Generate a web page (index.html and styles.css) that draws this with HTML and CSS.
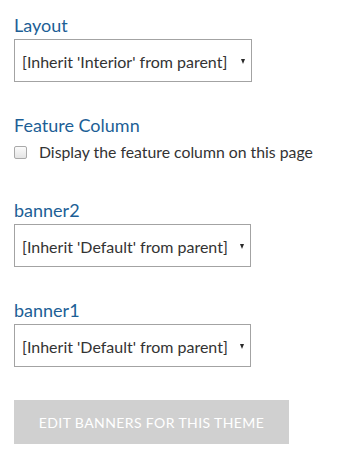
FILE: index.html
```html
<!DOCTYPE html>
<html>
<head>
<meta charset="utf-8">
<link rel="stylesheet" href="styles.css">
</head>
<body>
<div class="form">
  <div class="field">
    <label class="label">Layout</label>
    <div class="select wide"><span class="value">[Inherit 'Interior' from parent]</span><span class="arrow"></span></div>
  </div>
  <div class="field feature">
    <label class="label">Feature Column</label>
    <div class="check-row"><span class="checkbox"></span><span class="check-text">Display the feature column on this page</span></div>
  </div>
  <div class="field">
    <label class="label">banner2</label>
    <div class="select"><span class="value">[Inherit 'Default' from parent]</span><span class="arrow"></span></div>
  </div>
  <div class="field last">
    <label class="label">banner1</label>
    <div class="select"><span class="value">[Inherit 'Default' from parent]</span><span class="arrow"></span></div>
  </div>
  <div class="button">EDIT BANNERS FOR THIS THEME</div>
</div>
</body>
</html>
```
FILE: styles.css
```css
html, body { margin: 0; padding: 0; background: #fff; }
body { font-family: Lato, "Open Sans", sans-serif; }
.form { padding: 14px 14px 0 14px; display: flex; flex-direction: column; }
.field { display: flex; flex-direction: column; margin-bottom: 32px; }
.label { color: #1d5f96; font-size: 18px; line-height: 22px; height: 22px; margin-bottom: 3px; }
.select {
  width: 237px; height: 43px; box-sizing: border-box;
  border: 1px solid #a3a3a3; background: #fff;
  display: flex; align-items: center; padding: 1px 0 0 7px;
  color: #333; font-size: 16px;
}
.select.wide { width: 238px; }
.value { flex: 1; white-space: nowrap; }
.arrow {
  width: 0; height: 0; margin-right: 6px;
  border-left: 2.5px solid transparent; border-right: 2.5px solid transparent;
  border-top: 5px solid #2a2a2a;
}
.feature { margin-bottom: 37px; }
.check-row { display: flex; align-items: center; margin-top: 3px; line-height: 20px; }
.checkbox {
  width: 13px; height: 13px; box-sizing: border-box; border: 1px solid #a9a9a9; border-radius: 2px;
  background: linear-gradient(#fbfbfb, #e4e4e4); margin-right: 12px; margin-top: 1px;
}
.check-text { color: #333; font-size: 15.8px; }
.field.last { margin-bottom: 33px; }
.button {
  width: 275px; height: 44px; background: #d0d0d0; color: #fff;
  font-size: 14px; letter-spacing: 0.4px; display: flex; align-items: center; justify-content: center;
}
```
